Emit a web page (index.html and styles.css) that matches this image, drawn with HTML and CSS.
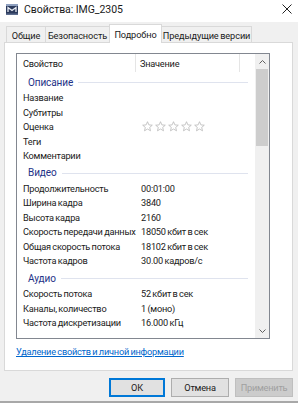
FILE: index.html
```html
<!DOCTYPE html>
<html lang="ru">
<head>
<meta charset="utf-8">
<link rel="stylesheet" href="styles.css">
</head>
<body>
<div class="window">
  <div class="titlebar">
    <svg class="appicon" width="12" height="11" viewBox="0 0 12 11">
      <rect x="0" y="0" width="12" height="11" fill="#2b3a5c"/>
      <rect x="0" y="0" width="12" height="2" fill="#8fa0bf"/>
      <path d="M2 8 L2 3.5 L6 6.5 L10 3.5 L10 8" fill="none" stroke="#e8ecf4" stroke-width="1.3"/>
      <rect x="0" y="9.5" width="12" height="1.5" fill="#5d6d8e"/>
    </svg>
    <span class="title">Свойства: IMG_2305</span>
    <svg class="close" width="10" height="10" viewBox="0 0 10 10">
      <path d="M0.5 0.5 L9.5 9.5 M9.5 0.5 L0.5 9.5" stroke="#222" stroke-width="1"/>
    </svg>
  </div>
  <div class="tabs">
    <div class="tab t1">Общие</div>
    <div class="tab t2">Безопасность</div>
    <div class="tab t3 active">Подробно</div>
    <div class="tab t4">Предыдущие версии</div>
  </div>
  <div class="panel">
    <div class="listbox">
      <div class="content">
        <div class="header">
          <div class="hcol c1">Свойство</div>
          <div class="hcol c2">Значение</div>
        </div>
        <div class="group"><span class="gname">Описание</span><span class="gline"></span></div>
        <div class="row"><span class="k">Название</span><span class="v"></span></div>
        <div class="row"><span class="k">Субтитры</span><span class="v"></span></div>
        <div class="row"><span class="k">Оценка</span><span class="v stars">
          <svg width="64" height="11" viewBox="0 0 64 11">
            <g fill="none" stroke="#b9b9b9" stroke-width="0.8">
              <path d="M5.5 0.7 L6.9 3.9 L10.3 4.2 L7.7 6.4 L8.5 9.8 L5.5 8 L2.5 9.8 L3.3 6.4 L0.7 4.2 L4.1 3.9 Z"/>
              <path transform="translate(13 0)" d="M5.5 0.7 L6.9 3.9 L10.3 4.2 L7.7 6.4 L8.5 9.8 L5.5 8 L2.5 9.8 L3.3 6.4 L0.7 4.2 L4.1 3.9 Z"/>
              <path transform="translate(26 0)" d="M5.5 0.7 L6.9 3.9 L10.3 4.2 L7.7 6.4 L8.5 9.8 L5.5 8 L2.5 9.8 L3.3 6.4 L0.7 4.2 L4.1 3.9 Z"/>
              <path transform="translate(39 0)" d="M5.5 0.7 L6.9 3.9 L10.3 4.2 L7.7 6.4 L8.5 9.8 L5.5 8 L2.5 9.8 L3.3 6.4 L0.7 4.2 L4.1 3.9 Z"/>
              <path transform="translate(52 0)" d="M5.5 0.7 L6.9 3.9 L10.3 4.2 L7.7 6.4 L8.5 9.8 L5.5 8 L2.5 9.8 L3.3 6.4 L0.7 4.2 L4.1 3.9 Z"/>
            </g>
          </svg></span></div>
        <div class="row"><span class="k">Теги</span><span class="v"></span></div>
        <div class="row"><span class="k">Комментарии</span><span class="v"></span></div>
        <div class="group"><span class="gname">Видео</span><span class="gline"></span></div>
        <div class="row"><span class="k">Продолжительность</span><span class="v">00:01:00</span></div>
        <div class="row"><span class="k">Ширина кадра</span><span class="v">3840</span></div>
        <div class="row"><span class="k">Высота кадра</span><span class="v">2160</span></div>
        <div class="row"><span class="k">Скорость передачи данных</span><span class="v">18050 кбит в сек</span></div>
        <div class="row"><span class="k">Общая скорость потока</span><span class="v">18102 кбит в сек</span></div>
        <div class="row"><span class="k">Частота кадров</span><span class="v">30.00 кадров/с</span></div>
        <div class="group"><span class="gname">Аудио</span><span class="gline"></span></div>
        <div class="row"><span class="k">Скорость потока</span><span class="v">52 кбит в сек</span></div>
        <div class="row"><span class="k">Каналы, количество</span><span class="v">1 (моно)</span></div>
        <div class="row"><span class="k">Частота дискретизации</span><span class="v">16.000 кГц</span></div>
      </div>
      <div class="scrollbar">
        <div class="sbtn">
          <svg width="7" height="4" viewBox="0 0 7 4"><path d="M0.5 3.5 L3.5 0.5 L6.5 3.5" fill="none" stroke="#606060" stroke-width="1"/></svg>
        </div>
        <div class="track"><div class="thumb"></div></div>
        <div class="sbtn">
          <svg width="7" height="4" viewBox="0 0 7 4"><path d="M0.5 0.5 L3.5 3.5 L6.5 0.5" fill="none" stroke="#606060" stroke-width="1"/></svg>
        </div>
      </div>
    </div>
    <a class="link" href="#">Удаление свойств и личной информации</a>
  </div>
  <div class="buttons">
    <div class="btn default">ОК</div>
    <div class="btn">Отмена</div>
    <div class="btn disabled">Применить</div>
  </div>
</div>
</body>
</html>
```

FILE: styles.css
```css
* { box-sizing: border-box; }
html, body { margin: 0; padding: 0; }
body {
  width: 298px;
  height: 403px;
  overflow: hidden;
  background: #f0f0f0;
  font-family: Roboto, "Noto Sans", sans-serif;
  font-size: 9.2px;
  letter-spacing: -0.22px;
  word-spacing: -0.6px;
  color: #1a1a1a;
}
.window {
  width: 298px;
  height: 403px;
  display: flex;
  flex-direction: column;
  border-bottom: 2px solid #a8a8a8;
}
.titlebar {
  height: 22px;
  background: #fff;
  display: flex;
  align-items: center;
  padding-left: 6px;
  flex: none;
}
.appicon { flex: none; margin-top: -4px; }
.title {
  margin-left: 6px;
  font-size: 10.5px;
  letter-spacing: -0.05px;
  word-spacing: 0;
  margin-top: -4px;
  white-space: nowrap;
}
.close { margin-left: auto; margin-right: 6px; margin-top: -4px; }
.tabs {
  height: 20px;
  display: flex;
  align-items: flex-end;
  padding-left: 6px;
  flex: none;
  position: relative;
  z-index: 2;
}
.tab {
  height: 16px;
  border: 1px solid #d9d9d9;
  border-bottom: none;
  border-right: none;
  background: #f0f0f0;
  display: flex;
  align-items: center;
  justify-content: center;
  white-space: nowrap;
  padding-top: 2px;
  letter-spacing: -0.1px;
}
.t1 { width: 39px; }
.t2 { width: 64px; }
.t3 { width: 53px; }
.t4 { width: 90px; border-right: 1px solid #d9d9d9; }
.tab.active {
  height: 19px;
  background: #fff;
  margin-bottom: -1px;
  border-right: 1px solid #d9d9d9;
  padding-top: 1px;
  padding-bottom: 0;
}
.tab.active + .tab { border-left: none; }
.panel {
  margin: 0 5px 0 4px;
  height: 329px;
  background: #fff;
  border: 1px solid #d9d9d9;
  padding: 10px 0 0 11px;
  flex: none;
}
.listbox {
  width: 254px;
  height: 286px;
  border: 1px solid #828790;
  display: flex;
  overflow: hidden;
}
.content {
  flex: 1;
  overflow: hidden;
}
.header {
  height: 18px;
  display: flex;
}
.hcol {
  height: 18px;
  display: flex;
  align-items: center;
  border-right: 1px solid #e5e5e5;
}
.hcol.c1 { width: 119px; padding-left: 6px; }
.hcol.c2 { width: 104px; padding-left: 4px; }
.group {
  height: 18.3px;
  display: flex;
  align-items: center;
  padding: 2px 7px 0 11px;
}
.gname {
  color: #1e3287;
  font-size: 10px;
  letter-spacing: -0.1px;
}
.gline {
  flex: 1;
  height: 1px;
  background: #dfe3ee;
  margin-left: 5px;
  margin-top: 1px;
}
.row {
  height: 14.5px;
  display: flex;
  align-items: center;
  white-space: nowrap;
}
.k { width: 119px; padding-left: 6px; overflow: hidden; }
.v { padding-left: 5px; display: flex; align-items: center; }
.stars svg { display: block; margin-left: 1px; }
.scrollbar {
  width: 14px;
  flex: none;
  background: #f0f0f0;
  display: flex;
  flex-direction: column;
}
.sbtn {
  height: 15px;
  display: flex;
  align-items: center;
  justify-content: center;
  flex: none;
}
.track { flex: 1; padding: 0 1px; }
.thumb { height: 77px; background: #cdcdcd; }
.link {
  display: block;
  margin-top: 7px;
  color: #0066cc;
  text-decoration: underline;
  white-space: nowrap;
}
.buttons {
  display: flex;
  justify-content: flex-end;
  gap: 6px;
  padding: 7px 5px 0 0;
}
.btn {
  width: 58px;
  height: 19px;
  border: 1px solid #adadad;
  background: #e1e1e1;
  display: flex;
  align-items: center;
  justify-content: center;
}
.btn.default { width: 56px; border-color: #0078d7; box-shadow: inset 0 0 0 1px #0078d7; }
.btn.disabled { color: #a0a0a0; background: #cccccc; border-color: #bfbfbf; }
```
